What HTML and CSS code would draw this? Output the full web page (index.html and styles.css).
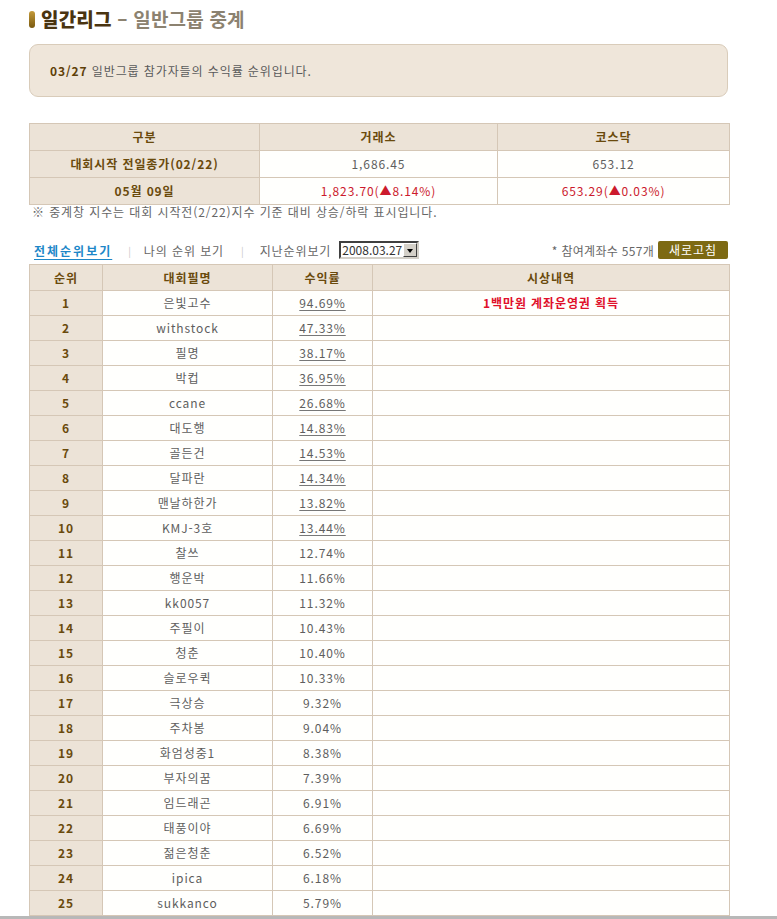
FILE: index.html
```html
<!DOCTYPE html>
<html lang="ko">
<head>
<meta charset="utf-8">
<title>일간리그 - 일반그룹 중계</title>
<link rel="stylesheet" href="styles.css">
</head>
<body>
<div class="page">
  <h1 class="title"><span class="pill"></span><b class="main">일간리그</b><span class="sub"> – 일반그룹 중계</span></h1>

  <div class="notice"><b>03/27</b>&nbsp;일반그룹 참가자들의 수익률 순위입니다.</div>

  <table class="summary">
    <colgroup><col class="c1"><col class="c2"><col class="c3"></colgroup>
    <tr><th>구분</th><th>거래소</th><th>코스닥</th></tr>
    <tr><th>대회시작 전일종가(02/22)</th><td>1,686.45</td><td>653.12</td></tr>
    <tr><th>05월 09일</th><td class="up">1,823.70(▲8.14%)</td><td class="up">653.29(▲0.03%)</td></tr>
  </table>
  <p class="note">※ 중계창 지수는 대회 시작전(2/22)지수 기준 대비 상승/하락 표시입니다.</p>

  <div class="toolbar">
    <div class="tabs">
      <a class="tab active">전체순위보기</a>
      <span class="sep">|</span>
      <a class="tab">나의 순위 보기</a>
      <span class="sep sep2">|</span>
      <span class="tab">지난순위보기</span>
      <span class="select"><span class="val">2008.03.27</span><span class="arrow"></span></span>
    </div>
    <div class="right">
      <span class="count">* 참여계좌수 557개</span>
      <span class="btn">새로고침</span>
    </div>
  </div>

  <table class="rank">
    <colgroup><col class="r1"><col class="r2"><col class="r3"><col class="r4"></colgroup>
    <tr><th>순위</th><th>대회필명</th><th>수익률</th><th>시상내역</th></tr>
    <tr><th>1</th><td>은빛고수</td><td><u>94.69%</u></td><td class="prize">1백만원 계좌운영권 획득</td></tr>
    <tr><th>2</th><td>withstock</td><td><u>47.33%</u></td><td></td></tr>
    <tr><th>3</th><td>필명</td><td><u>38.17%</u></td><td></td></tr>
    <tr><th>4</th><td>박컵</td><td><u>36.95%</u></td><td></td></tr>
    <tr><th>5</th><td>ccane</td><td><u>26.68%</u></td><td></td></tr>
    <tr><th>6</th><td>대도행</td><td><u>14.83%</u></td><td></td></tr>
    <tr><th>7</th><td>골든건</td><td><u>14.53%</u></td><td></td></tr>
    <tr><th>8</th><td>달파란</td><td><u>14.34%</u></td><td></td></tr>
    <tr><th>9</th><td>맨날하한가</td><td><u>13.82%</u></td><td></td></tr>
    <tr><th>10</th><td>KMJ-3호</td><td><u>13.44%</u></td><td></td></tr>
    <tr><th>11</th><td>찰쓰</td><td>12.74%</td><td></td></tr>
    <tr><th>12</th><td>행운박</td><td>11.66%</td><td></td></tr>
    <tr><th>13</th><td>kk0057</td><td>11.32%</td><td></td></tr>
    <tr><th>14</th><td>주필이</td><td>10.43%</td><td></td></tr>
    <tr><th>15</th><td>청춘</td><td>10.40%</td><td></td></tr>
    <tr><th>16</th><td>슬로우퀵</td><td>10.33%</td><td></td></tr>
    <tr><th>17</th><td>극상승</td><td>9.32%</td><td></td></tr>
    <tr><th>18</th><td>주차봉</td><td>9.04%</td><td></td></tr>
    <tr><th>19</th><td>화엄성중1</td><td>8.38%</td><td></td></tr>
    <tr><th>20</th><td>부자의꿈</td><td>7.39%</td><td></td></tr>
    <tr><th>21</th><td>임드래곤</td><td>6.91%</td><td></td></tr>
    <tr><th>22</th><td>태풍이야</td><td>6.69%</td><td></td></tr>
    <tr><th>23</th><td>젊은청춘</td><td>6.52%</td><td></td></tr>
    <tr><th>24</th><td>ipica</td><td>6.18%</td><td></td></tr>
    <tr><th>25</th><td>sukkanco</td><td>5.79%</td><td></td></tr>
  </table>
</div>
<div class="bottomline"></div>
</body>
</html>
```

FILE: styles.css
```css
html, body {
  margin: 0;
  padding: 0;
  background: #fff;
}
body {
  font-family: "Noto Sans CJK KR", "Noto Sans", sans-serif;
  font-size: 12px;
  letter-spacing: 0.9px;
  color: #5a5a5a;
  height: 919px;
  position: relative;
  overflow: hidden;
}
.page {
  width: 699px;
  padding-left: 29px;
}
.title {
  margin: 9px 0 0;
  height: 20px;
  line-height: 20px;
  font-size: 19px;
  font-weight: bold;
  display: flex;
  align-items: center;
  letter-spacing: 0.2px;
}
.pill {
  display: inline-block;
  width: 6px;
  height: 17px;
  border-radius: 3px;
  background: linear-gradient(#c49a3a, #7a5a10);
  margin-right: 6px;
}
.title .main {
  color: #4a3410;
}
.title .sub {
  color: #8c8270;
  font-weight: bold;
  white-space: pre;
}
.notice {
  margin-top: 15px;
  height: 53px;
  box-sizing: border-box;
  border: 1px solid #d9ccba;
  border-radius: 9px;
  background: #efe6da;
  display: flex;
  align-items: center;
  padding-left: 20px;
  color: #5a5a5a;
}
.notice b {
  color: #5e3f08;
}
table {
  border-collapse: collapse;
  width: 700px;
  table-layout: fixed;
}
th, td {
  border: 1px solid #d5c7b6;
  text-align: center;
  padding: 0;
  line-height: 14px;
}
th {
  background: #ece3d7;
  color: #6a4a0c;
  font-weight: bold;
}
td {
  background: #fffffd;
  color: #5e5e5e;
}
.summary {
  margin-top: 26px;
}
.summary col.c1 { width: 230px; }
.summary col.c2 { width: 238px; }
.summary col.c3 { width: 232px; }
.summary th, .summary td {
  height: 26px;
}
td.up {
  color: #cc1a2c;
}
.note {
  margin: 0;
  height: 14px;
  line-height: 14px;
  padding-left: 3px;
  color: #666;
}
.toolbar {
  margin-top: 22px;
  height: 18px;
  display: flex;
  justify-content: space-between;
  align-items: center;
}
.tabs {
  display: flex;
  align-items: center;
  padding-left: 5px;
}
.tab {
  color: #666;
}
.tab.active {
  color: #1d87c8;
  font-weight: bold;
  letter-spacing: 2px;
  text-decoration: underline;
  text-underline-offset: 3px;
}
.sep {
  color: #c8c8c8;
  font-size: 10px;
  margin: 0 12px 0 16px;
}
.sep.sep2 {
  margin: 0 15px 0 17px;
}
.select {
  margin-left: 8px;
  display: inline-flex;
  align-items: center;
  width: 80px;
  height: 18px;
  box-sizing: border-box;
  border: 2px solid;
  border-color: #404040 #d4d0c8 #d4d0c8 #404040;
  background: #fff;
  color: #333;
  letter-spacing: 0;
}
.select .val {
  flex: 1;
  padding-left: 1px;
  font-size: 12px;
  line-height: 14px;
}
.select .arrow {
  width: 14px;
  height: 14px;
  box-sizing: border-box;
  background: #d4d0c8;
  border: 1px solid;
  border-color: #fff #404040 #404040 #fff;
  position: relative;
}
.select .arrow::after {
  content: "";
  position: absolute;
  left: 3px;
  top: 5px;
  border-left: 3.5px solid transparent;
  border-right: 3.5px solid transparent;
  border-top: 4px solid #000;
}
.right {
  display: flex;
  align-items: center;
}
.count {
  color: #666;
  margin-right: 4px;
  letter-spacing: 0.3px;
}
.btn {
  display: inline-block;
  width: 70px;
  height: 18px;
  line-height: 18px;
  text-align: center;
  background: #7d6a13;
  color: #fff;
  border-radius: 2px;
}
.rank {
  margin-top: 5px;
}
.rank col.r1 { width: 73px; }
.rank col.r2 { width: 170px; }
.rank col.r3 { width: 100px; }
.rank col.r4 { width: 357px; }
.rank tr:first-child th {
  height: 25px;
}
.rank th, .rank td {
  height: 24px;
}
.rank u {
  text-decoration: underline;
  text-underline-offset: 2px;
  text-decoration-color: #777;
}
td.prize {
  color: #e0102a;
  font-weight: bold;
}
.bottomline {
  position: absolute;
  left: 0;
  right: 0;
  top: 916px;
  height: 3px;
  background: #b8b8b8;
}
```
